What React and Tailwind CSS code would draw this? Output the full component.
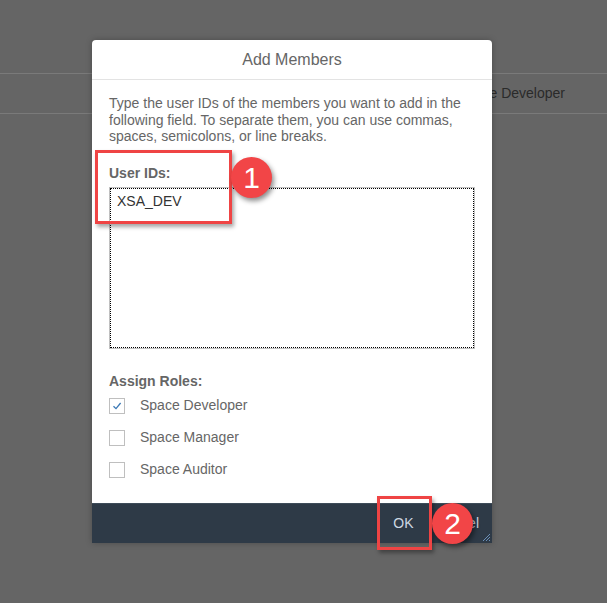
import React from "react";

function Checkbox({ checked }) {
  return (
    <span className="flex h-[16px] w-[16px] items-center justify-center border border-[#bfbfbf] bg-white">
      {checked && (
        <svg width="10" height="10" viewBox="0 0 10 10">
          <path d="M1.5 5.2 L4 7.6 L8.6 2" fill="none" stroke="#3a78b5" strokeWidth="1.3" />
        </svg>
      )}
    </span>
  );
}

function Badge({ n }) {
  return (
    <span className="flex h-[41px] w-[41px] items-center justify-center rounded-full bg-[#f24547] text-[30px] leading-none text-white shadow-[2px_3px_5px_rgba(0,0,0,0.45)] [font-family:'Liberation_Sans',Arial,sans-serif]">
      {n}
    </span>
  );
}

export default function App() {
  return (
    <div className="relative h-[603px] w-[607px] overflow-hidden bg-[#656565] [font-family:'Liberation_Sans',Arial,sans-serif]">
      {/* background page row */}
      <div className="pt-[73px]">
        <div className="flex h-[41px] items-center justify-end border-y border-[#7a7a7a] pr-[42px] text-[14px] text-[#2a2a2a]">
          Space Developer
        </div>
      </div>

      {/* dialog */}
      <div className="absolute left-[92px] top-[40px] flex w-[400px] flex-col overflow-hidden rounded-t-[4px] bg-white shadow-[0_0_6px_rgba(0,0,0,0.25)]">
        <div className="flex h-[40px] items-center justify-center border-b border-[#e3e3e3] text-[16px] text-[#666]">
          Add Members
        </div>
        <div className="flex flex-col px-[17px] pt-[15px]">
          <p className="text-[14px] leading-[16.5px] text-[#666]">
            Type the user IDs of the members you want to add in the following field. To separate them, you can use commas, spaces, semicolons, or line breaks.
          </p>
          <div className="mt-[20px] text-[14px] font-bold leading-[16px] text-[#666]">User IDs:</div>
          <div className="mt-[6px] h-[162px] w-[366px] border border-[#c0c0c0]">
            <div className="h-full w-full border border-dotted border-black px-[6px] pt-[4px] text-[14px] leading-[16px] text-[#333]">
              XSA_DEV
            </div>
          </div>
          <div className="mt-[24px] text-[14px] font-bold leading-[16px] text-[#666]">Assign Roles:</div>
          <div className="mt-[1px] flex flex-col">
            {[
              ["Space Developer", true],
              ["Space Manager", false],
              ["Space Auditor", false],
            ].map(([label, checked]) => (
              <div key={label} className="flex h-[32px] items-center gap-[15px]">
                <Checkbox checked={checked} />
                <span className="text-[14px] text-[#666]">{label}</span>
              </div>
            ))}
          </div>
        </div>
        <div className="mt-[17px]" />
        <div className="relative flex h-[40px] items-center justify-end gap-[12px] border-t border-[#3e4c59] bg-[#2e3a47] pr-[13px] text-[14px] text-[#cdd8e3]">
          <span className="w-[40px] text-center">OK</span>
          <span>Cancel</span>
          <svg className="absolute bottom-[1px] right-[1px]" width="10" height="10" viewBox="0 0 10 10">
            <path d="M9 2 L2 9 M9 5 L5 9 M9 8 L8 9" stroke="#6a8fb8" strokeWidth="1" />
          </svg>
        </div>
      </div>

      {/* annotations */}
      <div className="absolute left-[95px] top-[150px] h-[74px] w-[137px] border-[3px] border-[#ef4444] shadow-[2px_3px_4px_rgba(0,0,0,0.35)]" />
      <div className="absolute left-[231px] top-[157px]">
        <Badge n="1" />
      </div>
      <div className="absolute left-[377px] top-[496px] h-[54px] w-[55px] border-[3px] border-[#ef4444] shadow-[2px_3px_4px_rgba(0,0,0,0.35)]" />
      <div className="absolute left-[432px] top-[503px]">
        <Badge n="2" />
      </div>
    </div>
  );
}
